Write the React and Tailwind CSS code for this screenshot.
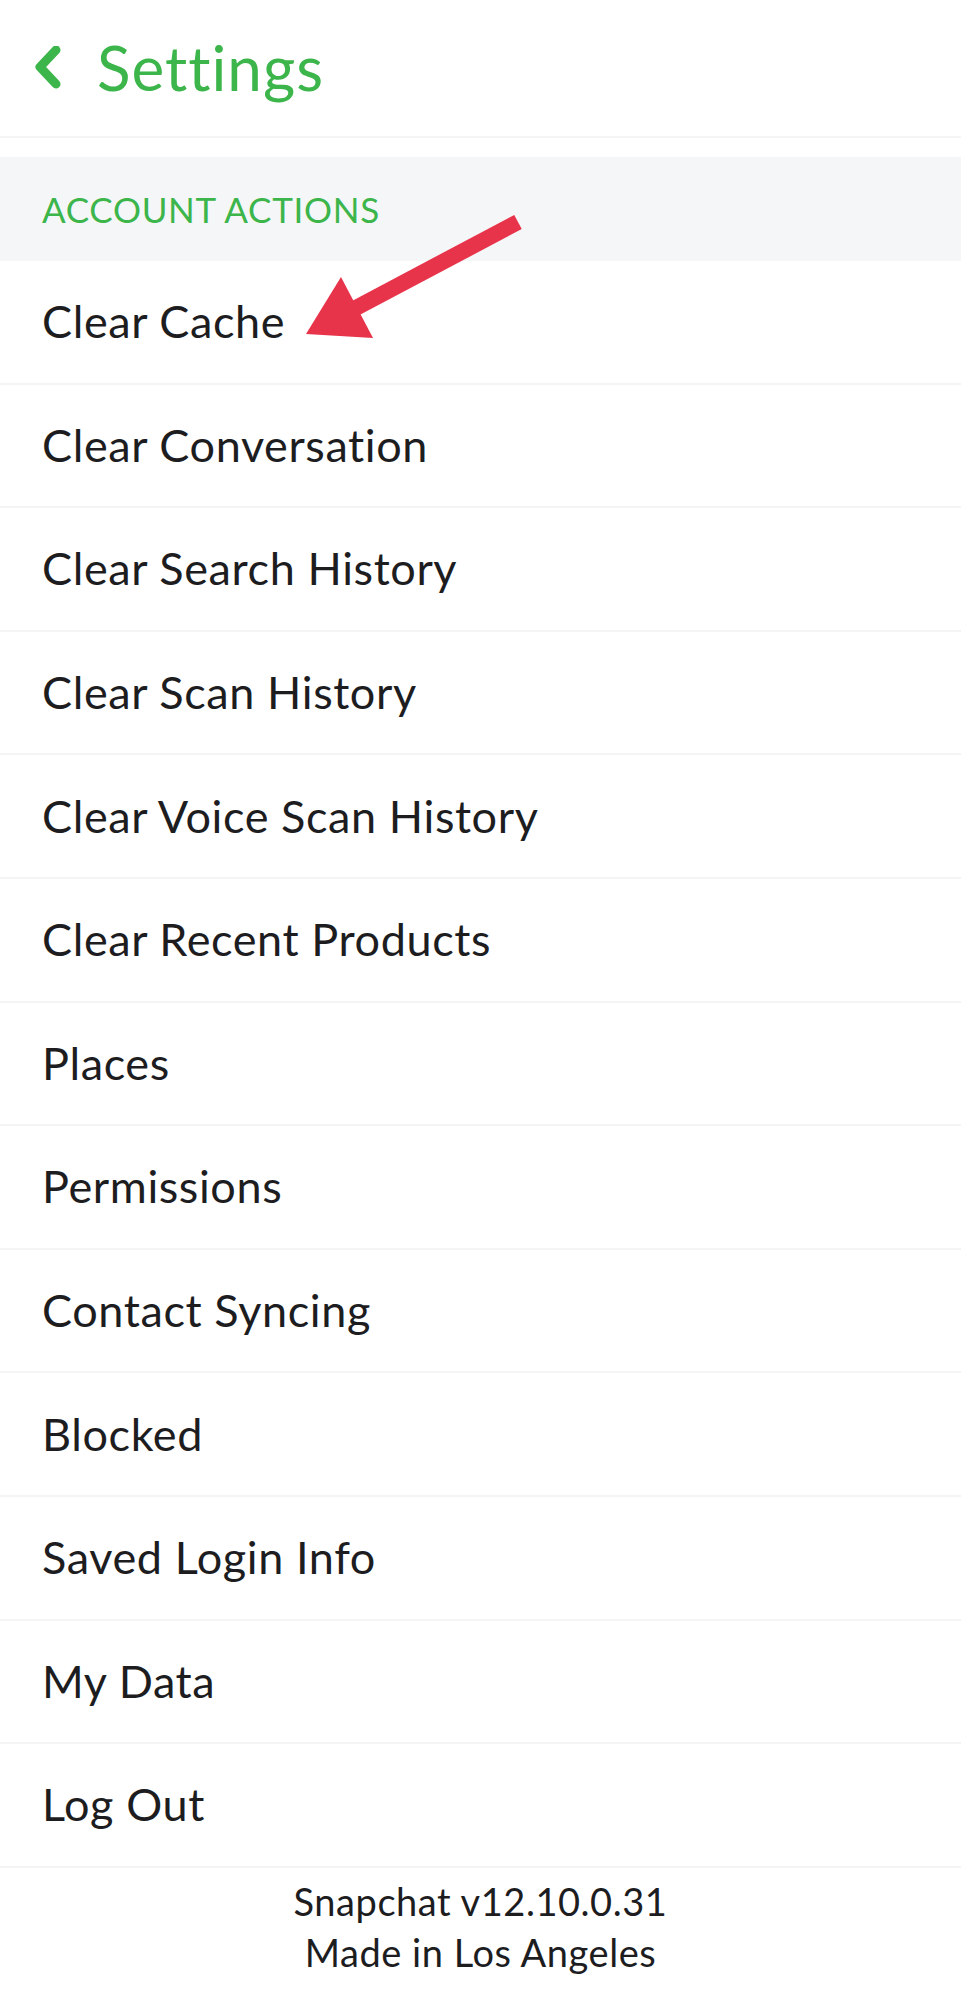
import React from 'react';

const rows = [
  'Clear Cache',
  'Clear Conversation',
  'Clear Search History',
  'Clear Scan History',
  'Clear Voice Scan History',
  'Clear Recent Products',
  'Places',
  'Permissions',
  'Contact Syncing',
  'Blocked',
  'Saved Login Info',
  'My Data',
  'Log Out',
];

function Arrow() {
  // red annotation arrow pointing at "Clear Cache"
  return (
    <svg
      className="absolute left-0 top-0 pointer-events-none"
      width="961"
      height="400"
      viewBox="0 0 961 400"
    >
      <line x1="352" y1="310" x2="518" y2="222" stroke="#e8344b" strokeWidth="16" />
      <polygon points="306,334 341,277 373,338" fill="#e8344b" />
    </svg>
  );
}

export default function App() {
  return (
    <div
      className="relative w-[961px] h-[1999px] bg-white overflow-hidden"
      style={{ fontFamily: 'Lato, "Noto Sans", sans-serif' }}
    >
      {/* header */}
      <div className="h-[136px] flex items-center pl-[34px] border-b-2 border-[#f5f5f5] box-content">
        <svg width="30" height="44" viewBox="0 0 30 44" className="mr-[33px]">
          <polyline
            points="22,4 6,21 22,38"
            fill="none"
            stroke="#3cb54b"
            strokeWidth="9"
            strokeLinecap="round"
            strokeLinejoin="round"
          />
        </svg>
        <span className="text-[62px] leading-none text-[#3cb54b] tracking-[1px] -mt-[2px]">Settings</span>
      </div>

      <div className="h-[19px]" />

      {/* section */}
      <div className="h-[104px] bg-[#f5f6f8] flex items-center pl-[42px]">
        <span className="text-[35px] leading-none text-[#3cb54b] tracking-[0.7px]">ACCOUNT ACTIONS</span>
      </div>

      <div className="flex flex-col">
        {rows.map((r) => (
          <div
            key={r}
            className="h-[123.6px] flex items-center pl-[42px] border-b-2 border-[#f4f4f4] text-[45px] tracking-[0.6px] leading-none text-[#1d1d1f]"
          >
            {r}
          </div>
        ))}
      </div>

      {/* footer */}
      <div className="flex flex-col items-center pt-[8px] text-[38px] tracking-[0.55px] leading-[51px] text-[#1d1d1f]">
        <span>Snapchat v12.10.0.31</span>
        <span>Made in Los Angeles</span>
      </div>

      <Arrow />
    </div>
  );
}
